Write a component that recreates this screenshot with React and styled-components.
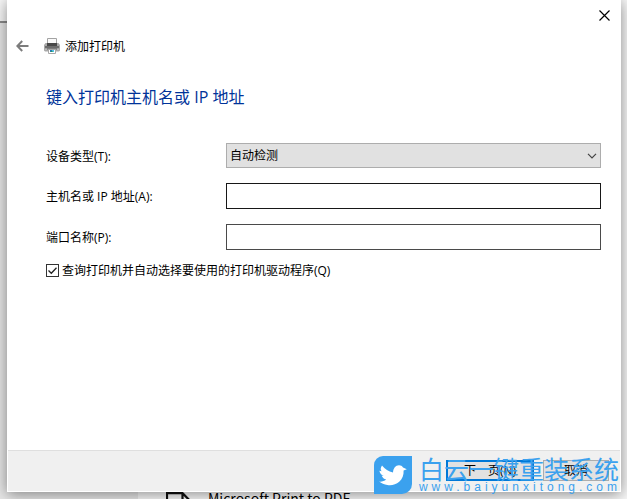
import React from 'react'
import styled, { createGlobalStyle } from 'styled-components'

function App() {
    return (
        <>
        <GlobalStyle />
        <Desktop>
            <BackWindow aria-hidden="true">
                <BackSide>
                    <BackTop />
                </BackSide>
                <BackList>
                    <DocIcon viewBox="0 0 24 28">
                        <path d="M1 28V1.2h15.500l7 7V28M16.500 1v8H24" fill="none" stroke="#111" strokeWidth="2.200" />
                    </DocIcon>
                    <span>Microsoft Print to PDF</span>
                </BackList>
            </BackWindow>
            <Dialog>
                <TitleBar>
                    <CloseButton aria-label="关闭">
                        <svg width="11" height="11" viewBox="0 0 11 11">
                            <path d="M.5.5l10 10M10.500.5l-10 10" stroke="#000" strokeWidth="1.200" />
                        </svg>
                    </CloseButton>
                </TitleBar>
                <Header>
                    <BackButton aria-label="返回">
                        <svg width="13" height="12" viewBox="0 0 13 12">
                            <path d="M6.200 1L1.300 6l4.900 5M1.500 6H12.500" fill="none" stroke="#7c7c7c" strokeWidth="2" />
                        </svg>
                    </BackButton>
                    <PrinterIcon />
                    <span>添加打印机</span>
                </Header>
                <Content>
                    <Heading>键入打印机主机名或 IP 地址</Heading>
                    <Fields>
                        <label htmlFor="type">设备类型(T):</label>
                        <SelectBox>
                            <Select id="type" defaultValue="auto">
                                <option value="auto">自动检测</option>
                            </Select>
                            <Chevron viewBox="0 0 10 6">
                                <path d="M1 .8l4 4 4-4" fill="none" stroke="#444" strokeWidth="1.200" />
                            </Chevron>
                        </SelectBox>
                        <label htmlFor="host">主机名或 IP 地址(A):</label>
                        <TextInput id="host" type="text" $dark />
                        <label htmlFor="port">端口名称(P):</label>
                        <TextInput id="port" type="text" />
                    </Fields>
                    <CheckLabel>
                        <CheckBox>
                            <input type="checkbox" defaultChecked />
                            <svg width="13" height="13" viewBox="0 0 13 13">
                                <path d="M2.500 6.500l2.800 2.800 5.200-5.600" fill="none" stroke="#222" strokeWidth="1.300" />
                            </svg>
                        </CheckBox>
                        <span>查询打印机并自动选择要使用的打印机驱动程序(Q)</span>
                    </CheckLabel>
                </Content>
                <Footer>
                    <NextButton>下一页(N)</NextButton>
                    <CancelButton>取消</CancelButton>
                </Footer>
            </Dialog>
            <Watermark>
                <BirdLogo />
                <div>
                    <SiteName>白云一键重装系统</SiteName>
                    <SiteUrl>www.baiyunxitong.com</SiteUrl>
                </div>
            </Watermark>
        </Desktop>
        </>
    )
}

export default App

function PrinterIcon() {
    return (
        <svg width="16" height="16" viewBox="0 0 16 16">
            <path d="M3.500 6V.5h9V6" fill="#fafafa" stroke="#a3a3a3" />
            <path d="M1.500 5h2v2h9V5h2L16 7v5.500l-1 1H1l-1-1V7z" fill="#a9a9a9" />
            <path d="M3 5h10v3H3z" fill="#484848" />
            <path d="M1 8h14v2.500H1z" fill="#6c6c6c" />
            <path d="M1 10.500h14V12H1z" fill="#bdbdbd" />
            <path d="M3 10.500h10v1H3z" fill="#555" />
            <path d="M4.500 11.500h7v4h-7z" fill="#fff" stroke="#a8a8a8" />
            <path d="M6 12h2v2H6z" fill="#2b78b5" />
            <path d="M8 12h2v2H8z" fill="#4fc3e8" />
            <path d="M7 13h1.500v1H7z" fill="#2d9a55" />
        </svg>
    )
}

function BirdLogo() {
    return (
        <svg width="38" height="38" viewBox="0 0 38 38">
            <path d="M9 0h29v28a10 10 0 0 1-10 10H0V9a9 9 0 0 1 9-9z" fill="#3ba1ee" />
            <path d="M8 9.500c3 3.800 6.500 6 11 7 .3-4.200 2.500-7 6-7.200 1.800 0 3.200.8 4 2.200l3.800 1.700-3.200 1.300c.3 4.500-1.200 8.600-4.400 11.300-3.200 2.800-7.600 3.900-11.800 3.200-3.200-.5-5.900-1.600-8.200-3.400 2.800.2 5-.4 7-2-2.200-.5-3.700-1.800-4.500-3.800l2 .1c-2.600-1.200-4-2.900-4.300-5.200l2.200.6c-1.300-1.600-1.200-3.500.4-5.800z" fill="#fff" />
        </svg>
    )
}

const GlobalStyle = createGlobalStyle`
* {
box-sizing: border-box;
}
body {
margin: 0;
}
body, input, select, button {
font-family: "Open Sans", "Noto Sans CJK SC", sans-serif;
font-size: 12px;
color: #000;
}
`;

const Desktop = styled.div`
position: relative;
min-height: 100vh;
display: flex;
overflow: hidden;
background-color: #f7f7f7;
`;

const BackWindow = styled.div`
position: absolute;
inset: 0;
display: flex;
`;
const BackSide = styled.div`
width: 138px;
background-color: #e6e6e6;
`;
const BackTop = styled.div`
height: 23px;
border-bottom: 2px solid #8a8a8a;
background-color: #f7f7f7;
`;
const BackList = styled.div`
flex: 1;
display: flex;
align-items: flex-end;
gap: 18px;
padding-left: 28px;
background-color: #f7f7f7;
font-size: 14px;
line-height: 20px;
span {
margin-bottom: -9px;
font-family: "Noto Sans CJK SC", sans-serif;
}
`;
const DocIcon = styled.svg`
width: 24px;
height: 28px;
margin-bottom: -21px;
`;

const Dialog = styled.main`
position: relative;
flex: 1;
display: flex;
flex-direction: column;
margin: 0 6px 7px 7px;
border: 1px solid #fff;
border-top: none;
background-color: #fff;
box-shadow: 0 2px 14px rgba(0, 0, 0, 0.45);
`;
const TitleBar = styled.div`
display: flex;
justify-content: flex-end;
height: 30px;
`;
const PlainButton = styled.button`
display: flex;
align-items: center;
justify-content: center;
padding: 0;
border: none;
background: none;
`;
const CloseButton = styled(PlainButton)`
width: 31px;
`;
const Header = styled.header`
display: flex;
align-items: center;
height: 32px;
padding-left: 4px;
svg {
flex: none;
}
span {
margin-left: 5px;
}
`;
const BackButton = styled(PlainButton)`
width: 20px;
height: 20px;
margin-right: 12px;
`;
const Content = styled.div`
flex: 1;
padding: 23px 19px 0 38px;
`;
const Heading = styled.h1`
margin: 0 0 34px;
font-size: 16px;
font-weight: 400;
line-height: 24px;
color: #003399;
`;
const Fields = styled.div`
display: grid;
grid-template-columns: 180px 1fr;
align-items: center;
row-gap: 15px;
`;
const SelectBox = styled.div`
display: grid;
align-items: center;
`;
const Select = styled.select`
grid-area: 1 / 1;
appearance: none;
width: 100%;
height: 25px;
padding: 0 3px;
border: 1px solid #adadad;
border-radius: 0;
background-color: #e1e1e1;
`;
const Chevron = styled.svg`
grid-area: 1 / 1;
justify-self: end;
width: 10px;
height: 6px;
margin-right: 4px;
pointer-events: none;
`;
const TextInput = styled.input`
width: 100%;
height: 26px;
padding: 0 4px;
border: 1px solid ${props => props.$dark ? '#171717' : '#4a4a4a'};
border-radius: 0;
background-color: #fff;
outline: none;
`;
const CheckLabel = styled.label`
display: flex;
align-items: center;
gap: 3px;
height: 18px;
margin-top: 11px;
`;
const CheckBox = styled.span`
display: grid;
input {
grid-area: 1 / 1;
appearance: none;
width: 13px;
height: 13px;
margin: 0;
border: 1px solid #333;
background-color: #fff;
}
svg {
grid-area: 1 / 1;
pointer-events: none;
visibility: hidden;
}
input:checked + svg {
visibility: visible;
}
`;
const Footer = styled.footer`
display: flex;
justify-content: flex-end;
gap: 9px;
height: 41px;
padding: 9px 11px 0 0;
border-top: 1px solid #dfdfdf;
background-color: #f0f0f0;
`;
const NextButton = styled.button`
width: 88px;
height: 21px;
padding: 0;
border: 2px solid #0078d7;
background-color: #e1e1e1;
line-height: 16px;
`;
const CancelButton = styled(NextButton)`
width: 66px;
border: 1px solid #adadad;
`;

const Watermark = styled.div`
position: absolute;
right: 6px;
bottom: 5px;
display: flex;
gap: 7px;
color: #3ba1ee;
pointer-events: none;
`;
const SiteName = styled.div`
font-family: "Noto Sans CJK SC", sans-serif;
font-size: 25px;
line-height: 25px;
`;
const SiteUrl = styled.div`
font-family: "Liberation Sans", sans-serif;
font-size: 12px;
line-height: 12px;
letter-spacing: 4px;
white-space: nowrap;
`;
